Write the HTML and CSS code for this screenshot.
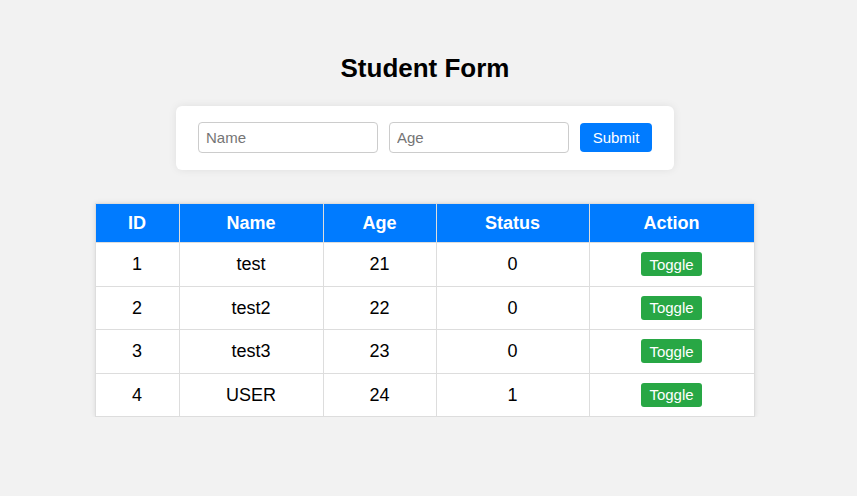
FILE: index.html
```html
<!DOCTYPE html>
<html lang="en">
<head>
<meta charset="utf-8">
<title>Student Form</title>
<link rel="stylesheet" href="styles.css">
</head>
<body>
<div class="page">
  <h1 class="title">Student Form</h1>
  <form class="card" onsubmit="return false">
    <input class="field" type="text" placeholder="Name">
    <input class="field" type="text" placeholder="Age">
    <button class="btn-submit" type="submit">Submit</button>
  </form>
  <table class="grid">
    <colgroup>
      <col class="c-id"><col class="c-name"><col class="c-age"><col class="c-status"><col class="c-action">
    </colgroup>
    <thead>
      <tr><th>ID</th><th>Name</th><th>Age</th><th>Status</th><th>Action</th></tr>
    </thead>
    <tbody>
      <tr><td>1</td><td>test</td><td>21</td><td>0</td><td><button class="btn-toggle">Toggle</button></td></tr>
      <tr><td>2</td><td>test2</td><td>22</td><td>0</td><td><button class="btn-toggle">Toggle</button></td></tr>
      <tr><td>3</td><td>test3</td><td>23</td><td>0</td><td><button class="btn-toggle">Toggle</button></td></tr>
      <tr><td>4</td><td>USER</td><td>24</td><td>1</td><td><button class="btn-toggle">Toggle</button></td></tr>
    </tbody>
  </table>
</div>
</body>
</html>
```
FILE: styles.css
```css
html, body {
  margin: 0;
  padding: 0;
  background: #f2f2f2;
  font-family: "Liberation Sans", Arial, sans-serif;
  color: #000;
}

.page {
  width: 850px;
  padding-top: 53px;
  display: flex;
  flex-direction: column;
  align-items: center;
}

.title {
  margin: 0 0 23px;
  font-size: 26px;
  line-height: 30px;
  font-weight: bold;
}

.card {
  width: 498px;
  height: 64px;
  box-sizing: border-box;
  background: #fff;
  border-radius: 6px;
  box-shadow: 0 0 8px rgba(0, 0, 0, 0.08);
  display: flex;
  align-items: center;
  justify-content: center;
  gap: 11px;
  margin: 0 0 33px;
}

.field {
  width: 180px;
  height: 31px;
  box-sizing: border-box;
  border: 1px solid #ccc;
  border-radius: 4px;
  padding: 0 7px;
  margin-top: -1px;
  font-family: "Liberation Sans", Arial, sans-serif;
  font-size: 15px;
  color: #000;
  background: #fff;
  outline: none;
}

.field::placeholder {
  color: #757575;
}

.btn-submit {
  width: 72px;
  height: 29px;
  margin-top: -1px;
  border: none;
  border-radius: 4px;
  background: #007bff;
  color: #fff;
  font-family: "Liberation Sans", Arial, sans-serif;
  font-size: 15px;
  padding: 0;
  cursor: pointer;
}

.grid {
  width: 659px;
  margin-left: -1px;
  border-collapse: collapse;
  table-layout: fixed;
  background: #fff;
  box-shadow: 0 0 5px rgba(0, 0, 0, 0.1);
  font-size: 18px;
}

.c-id { width: 84px; }
.c-name { width: 144px; }
.c-age { width: 113px; }
.c-status { width: 153px; }
.c-action { width: 165px; }

.grid th,
.grid td {
  border: 1px solid #ddd;
  text-align: center;
  padding: 0;
  line-height: 20px;
}

.grid th {
  background: #007bff;
  color: #fff;
  font-weight: bold;
  height: 38px;
}

.grid td {
  height: 42.5px;
}

.btn-toggle {
  display: inline-block;
  vertical-align: middle;
  width: 61px;
  height: 24px;
  border: none;
  border-radius: 3px;
  background: #28a745;
  color: #fff;
  font-family: "Liberation Sans", Arial, sans-serif;
  font-size: 15px;
  padding: 0;
  cursor: pointer;
}
```
